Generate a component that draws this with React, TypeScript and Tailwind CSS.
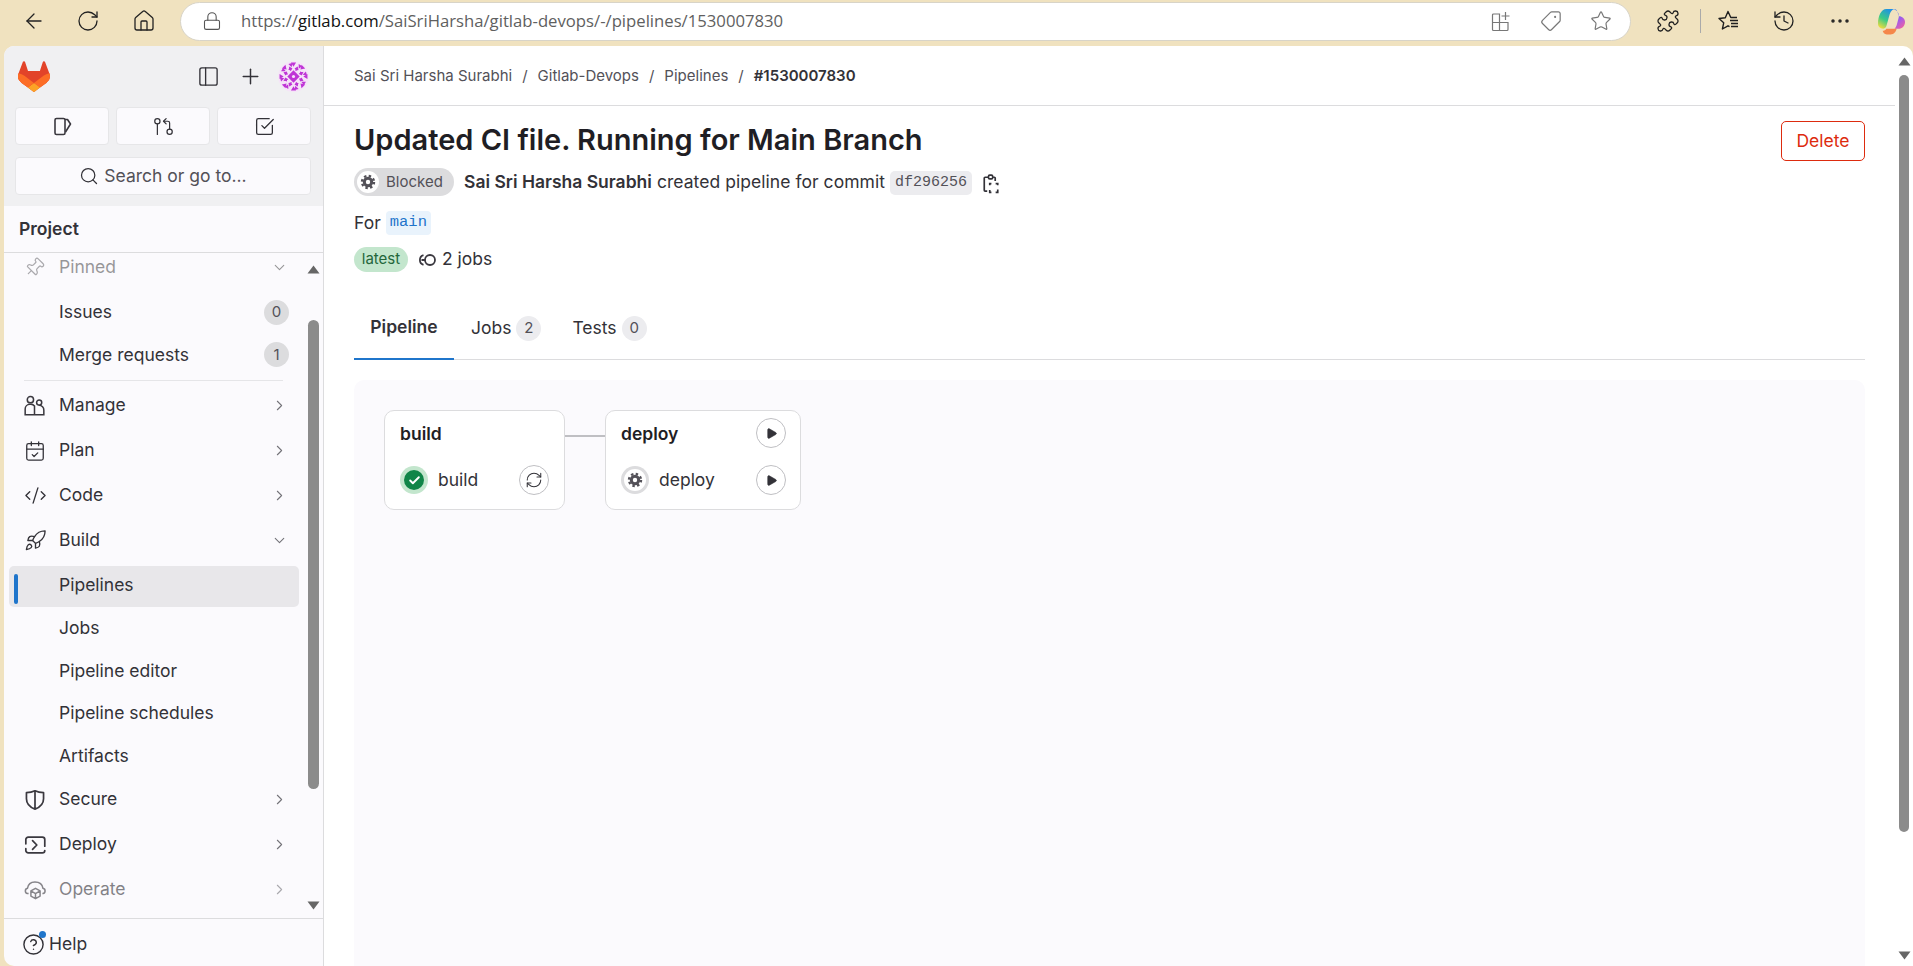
import {
  ArrowLeft,
  RotateCw,
  House,
  Lock,
  Tag,
  Star,
  Puzzle,
  History,
  Ellipsis,
  PanelLeft,
  Plus,
  Search,
  GitPullRequestArrow,
  SquareCheckBig,
  Pin,
  ChevronRight,
  ChevronDown,
  CalendarCheck,
  CodeXml,
  Rocket,
  CircleHelp,
  RefreshCw,
  Play,
  Check,
} from 'lucide-react';

function GitlabLogo() {
  return (
    <svg width="32" height="31" viewBox="0 0 25 24">
      <path fill="#E24329" d="m24.507 9.5-.034-.09L21.082.562a.896.896 0 0 0-1.694.091l-2.29 7.01H7.825L5.535.653a.898.898 0 0 0-1.694-.09L.451 9.411.416 9.5a6.297 6.297 0 0 0 2.09 7.278l.012.01.03.022 5.16 3.867 2.56 1.935 1.554 1.176a1.051 1.051 0 0 0 1.268 0l1.555-1.176 2.56-1.935 5.197-3.89.014-.01A6.297 6.297 0 0 0 24.507 9.5Z" />
      <path fill="#FC6D26" d="m24.507 9.5-.034-.09a11.44 11.44 0 0 0-4.56 2.051l-7.447 5.632 4.742 3.584 5.197-3.89.014-.01A6.297 6.297 0 0 0 24.507 9.5Z" />
      <path fill="#FCA326" d="m7.707 20.677 2.56 1.935 1.555 1.176a1.051 1.051 0 0 0 1.268 0l1.555-1.176 2.56-1.935-4.743-3.584-4.755 3.584Z" />
      <path fill="#FC6D26" d="M5.01 11.461a11.43 11.43 0 0 0-4.56-2.05L.416 9.5a6.297 6.297 0 0 0 2.09 7.278l.012.01.03.022 5.16 3.867 4.745-3.584-7.444-5.632Z" />
    </svg>
  );
}

function Avatar() {
  const spokes = [0, 45, 90, 135, 180, 225, 270, 315];
  return (
    <svg width="31" height="31" viewBox="0 0 30 30">
      <circle cx="15" cy="15" r="15" fill="#f5e4f8" />
      <path d="M15 9l6 6-6 6-6-6z" fill="#bf35d6" />
      <circle cx="15" cy="15" r="1.500" fill="#f5e4f8" />
      {spokes.map((a) => (
        <g key={a} transform={`rotate(${a} 15 15)`} fill="#bf35d6">
          <path d="M12.500 1.500h5l-2.500 4zM10.500 5.500l3.500 1.500-2 3zM16 7l3.500-1.500-1.500 4z" />
          <path d="M20 3l3.500 2-3.500 2.500z" />
        </g>
      ))}
    </svg>
  );
}

function Copilot() {
  return (
    <svg width="27" height="27" viewBox="0 0 26 26">
      <defs>
        <linearGradient id="cpa" x1="0.7" y1="0" x2="0.2" y2="1">
          <stop offset="0" stopColor="#1f8fe8" />
          <stop offset="0.55" stopColor="#3ccb85" />
          <stop offset="1" stopColor="#f6dc3a" />
        </linearGradient>
        <linearGradient id="cpb" x1="0.3" y1="0" x2="0.8" y2="1">
          <stop offset="0" stopColor="#2f6ff0" />
          <stop offset="0.55" stopColor="#a85be6" />
          <stop offset="1" stopColor="#f0629e" />
        </linearGradient>
      </defs>
      <path fill="url(#cpa)" d="M8 1h8c-3 .5-4 3-5 6l-2.500 9c-.5 2.500-1.500 4-3.500 4-3 0-5-2-5-5C0 8 3 1 8 1z" />
      <path fill="url(#cpb)" d="M15 1c2 0 3.500 1 4 3.500l1 3.500c3.500 0 6 2.500 6 5.500 0 4-3 6.500-6 6.500h-4c1-1 1.800-2.500 2.300-4.500L20 9c.5-3.500-1-6.500-5-8z" />
      <path fill="#f5874a" d="M8 20h10c-1 3-2.500 5.500-6 5.500H8.500C6 25.500 5 23.500 4.500 22c1.500 0 2.800-.5 3.500-2z" />
    </svg>
  );
}

function AppsPlus() {
  return (
    <svg width="20" height="21" viewBox="0 0 20 21" fill="none" stroke="#777" strokeWidth="1.2">
      <path d="M8.500 3H2.500a1 1 0 0 0-1 1v14.500a1 1 0 0 0 1 1H16a1 1 0 0 0 1-1V11.500H8.500zM8.500 11.500v8M1.500 11.500h7M14.500 1v8M10.500 5h8" />
    </svg>
  );
}

function FavList() {
  return (
    <svg width="24" height="24" viewBox="0 0 24 24" fill="none" stroke="#1f1f1f" strokeWidth="1.400" strokeLinejoin="round">
      <path d="M20 8.500h-6.200L11 2.500 8.300 8.700 2 9.500l4.700 4.300L5.400 20l5.600-3.200 1.500.9" />
      <path d="M13 11.500h8M14 14.500h7M14 17.500h7" />
    </svg>
  );
}

function IssueIcon() {
  return (
    <svg width="19" height="19" viewBox="0 0 19 19" fill="none" stroke="#3a383f" strokeWidth="1.600" strokeLinejoin="round">
      <path d="M3.500 1.500h7a1.500 1.500 0 0 1 1.500 1.500v13a1.500 1.500 0 0 1-1.500 1.500h-7A1.500 1.500 0 0 1 2 16V3a1.500 1.500 0 0 1 1.500-1.500z" />
      <path d="M12 2.500h2.500l3 4.500-5 8" />
    </svg>
  );
}

function UsersIcon() {
  return (
    <svg width="21" height="21" viewBox="0 0 18 18" fill="none" stroke="#3a383f" strokeWidth="1.300">
      <circle cx="5.500" cy="4" r="2.700" />
      <circle cx="13" cy="6.500" r="2.200" />
      <path d="M1 17v-5a4 4 0 0 1 4-4h1a4 4 0 0 1 3 1.500V17zM9 17h8v-4a4 4 0 0 0-4-4.200" />
    </svg>
  );
}

function ShieldIcon() {
  return (
    <svg width="22" height="22" viewBox="0 0 18 18" fill="none" stroke="#3a383f" strokeWidth="1.400" strokeLinejoin="round">
      <path d="M9 1.500c2 1 4.500 1.500 7 1.500v5c0 4-3 7-7 8.500C5 15 2 12 2 8V3c2.500 0 5-.5 7-1.500zM9 2v14.500" />
    </svg>
  );
}

function DeployIcon() {
  return (
    <svg width="22" height="22" viewBox="0 0 18 18" fill="none" stroke="#3a383f" strokeWidth="1.400" strokeLinecap="round" strokeLinejoin="round">
      <path d="M1.500 8V4.500a2 2 0 0 1 2-2H15a2 2 0 0 1 2 2V10M17 13.500a2 2 0 0 1-2 2H3.500a2 2 0 0 1-2-2V12" />
      <path d="M7 5.500l3.500 3.500L7 12.500" />
    </svg>
  );
}

function OperateIcon() {
  return (
    <svg width="23" height="21" viewBox="0 0 20 18" fill="none" stroke="#3a383f" strokeWidth="1.300" strokeLinejoin="round">
      <path d="M4 12.500H3a2.300 2.300 0 0 1 0-4.500c.5-3 2.500-5.500 6.500-5.500s6.500 2 7 5.500a2.300 2.300 0 0 1 0 4.500H16" />
      <path d="M10 8l4 2.200v4.500L10 17l-4-2.300v-4.500zM6 10.200l4 2.300 4-2.300M10 12.500V17" />
    </svg>
  );
}

function JobsIcon() {
  return (
    <svg width="20" height="14" viewBox="0 0 20 14" fill="none" stroke="#3a383f" strokeWidth="1.800">
      <circle cx="13" cy="7" r="5" />
      <path d="M6.500 2.200a5 5 0 0 0 0 9.600M4.500 7h3.500" />
    </svg>
  );
}

function Gear({ size }: { size: number }) {
  return (
    <svg width={size} height={size} viewBox="0 0 16 16" className="text-[#535158]">
      <circle cx="8" cy="8" r="5.200" fill="currentColor" />
      <circle cx="8" cy="8" r="6" fill="none" stroke="currentColor" strokeWidth="2.400" strokeDasharray="2.400 2.310" />
      <circle cx="8" cy="8" r="2.200" fill="white" />
    </svg>
  );
}

function ClipboardDashed() {
  return (
    <svg width="16" height="20" viewBox="0 0 19 23" fill="none" stroke="#333238" strokeWidth="2">
      <path d="M6.500 3.500H2.500a1 1 0 0 0-1 1V19a1 1 0 0 0 1 1H5M12 3.500h1.500a1 1 0 0 1 1 1V8" />
      <rect x="6.500" y="1" width="5" height="4.500" rx="1.500" />
      <path d="M8 13v-2h2M15 11h2.500v2M17.500 18v3.500H15M10 21.500H8v-3" />
    </svg>
  );
}

function ArrowUp() {
  return (
    <svg width="13" height="9" viewBox="0 0 13 9" className="block shrink-0">
      <path d="M6.500 0.500L12.500 8.500H0.500z" fill="#666" />
    </svg>
  );
}

function ArrowDown() {
  return (
    <svg width="13" height="9" viewBox="0 0 13 9" className="block shrink-0">
      <path d="M6.500 8.500L12.500 0.500H0.500z" fill="#666" />
    </svg>
  );
}

function NavRow({ label, icon, chevron, faded }: { label: string; icon: React.ReactNode; chevron: 'right' | 'down'; faded?: boolean }) {
  return (
    <div className={`flex h-[45px] items-center pl-[20px] pr-[35px] ${faded ? 'opacity-60' : ''}`}>
      <div className="flex w-[35px] items-center">{icon}</div>
      <span className="flex-1 text-[#333238]">{label}</span>
      {chevron === 'right' ? (
        <ChevronRight size={17} strokeWidth={1.5} className="text-[#737278]" />
      ) : (
        <ChevronDown size={17} strokeWidth={1.5} className="text-[#737278]" />
      )}
    </div>
  );
}

function SubRow({ label, count, active }: { label: string; count?: number; active?: boolean }) {
  if (active) {
    return (
      <div className="mx-[5px] mt-[3px] flex h-[41px] w-[290px] items-center rounded-[5px] bg-[#e8e7ea] pb-[2px] pl-[50px]">
        <span className="text-[#333238]">{label}</span>
      </div>
    );
  }
  return (
    <div className="flex h-[42.500px] items-center pl-[55px] pr-[34px]">
      <span className="flex-1 text-[#333238]">{label}</span>
      {count !== undefined && (
        <span className="flex h-[25px] w-[25px] items-center justify-center rounded-full bg-[#dcdcde] text-[15px] text-[#535158]">{count}</span>
      )}
    </div>
  );
}

function Sidebar() {
  return (
    <aside className="relative flex w-[320px] shrink-0 flex-col overflow-hidden rounded-tl-[10px] rounded-bl-[10px] border-r border-[#dcdcde] bg-[#fbfafd] text-[17.500px]">
      <div className="h-[160px] bg-[#f0f0f2] px-[11px] pt-[15px]">
        <div className="flex h-[31px] items-center pl-[3px] pr-[3px]">
          <GitlabLogo />
          <div className="flex-1" />
          <PanelLeft size={23} strokeWidth={1.4} className="mr-[18px] text-[#333238]" />
          <Plus size={25} strokeWidth={1.4} className="mr-[15px] text-[#333238]" />
          <Avatar />
        </div>
        <div className="mt-[15px] flex gap-[7px]">
          <div className="flex h-[38px] w-[94px] items-center justify-center rounded-[4px] border border-[#e6e6e8] bg-[#fbfafd]">
            <IssueIcon />
          </div>
          <div className="flex h-[38px] w-[94px] items-center justify-center rounded-[4px] border border-[#e6e6e8] bg-[#fbfafd]">
            <GitPullRequestArrow size={21} strokeWidth={1.4} className="text-[#333238]" />
          </div>
          <div className="flex h-[38px] w-[94px] items-center justify-center rounded-[4px] border border-[#e6e6e8] bg-[#fbfafd]">
            <SquareCheckBig size={21} strokeWidth={1.5} className="text-[#333238]" />
          </div>
        </div>
        <div className="mt-[12px] flex h-[38px] w-[296px] items-center justify-center gap-[5px] rounded-[4px] border border-[#e6e6e8] bg-[#fbfafd] text-[#535158]">
          <Search size={20} strokeWidth={1.500} className="text-[#333238]" />
          Search or go to...
        </div>
      </div>
      <div className="flex h-[47px] items-center border-b border-[#dcdcde] pl-[15px] font-semibold text-[#333238]">Project</div>
      <div className="h-[665px] overflow-hidden">
        <div className="flex h-[28px] items-center pl-[20px] pr-[35px] opacity-40">
          <div className="flex w-[35px]">
            <Pin size={21} strokeWidth={1.4} className="rotate-45 text-[#333238]" />
          </div>
          <span className="flex-1">Pinned</span>
          <ChevronDown size={17} strokeWidth={1.5} />
        </div>
        <div className="h-[10px]" />
        <SubRow label="Issues" count={0} />
        <SubRow label="Merge requests" count={1} />
        <div className="mx-[20px] mt-[4px] mb-[2px] h-px w-[259px] bg-[#e5e5e8]" />
        <NavRow label="Manage" icon={<UsersIcon />} chevron="right" />
        <NavRow label="Plan" icon={<CalendarCheck size={22} strokeWidth={1.4} className="text-[#333238]" />} chevron="right" />
        <NavRow label="Code" icon={<CodeXml size={23} strokeWidth={1.4} className="text-[#333238]" />} chevron="right" />
        <NavRow label="Build" icon={<Rocket size={23} strokeWidth={1.4} className="text-[#333238]" />} chevron="down" />
        <div className="relative">
          <SubRow label="Pipelines" active />
          <div className="absolute top-[8px] left-[10px] h-[30px] w-[4px] rounded-full bg-[#1f75cb]" />
        </div>
        <SubRow label="Jobs" />
        <SubRow label="Pipeline editor" />
        <SubRow label="Pipeline schedules" />
        <SubRow label="Artifacts" />
        <NavRow label="Secure" icon={<ShieldIcon />} chevron="right" />
        <NavRow label="Deploy" icon={<DeployIcon />} chevron="right" />
        <NavRow label="Operate" icon={<OperateIcon />} chevron="right" faded />
      </div>
      <div className="relative flex flex-1 items-center gap-[4px] border-t border-[#dcdcde] pt-[4px] pl-[18px]">
        <div className="relative">
          <CircleHelp size={23} strokeWidth={1.5} className="text-[#333238]" />
          <span className="absolute -top-[2px] left-[17px] h-[7px] w-[7px] rounded-full bg-[#1f75cb]" />
        </div>
        <span className="text-[#333238]">Help</span>
      </div>
      {/* sidebar scrollbar */}
      <div className="absolute top-[219px] right-[3px]"><ArrowUp /></div>
      <div className="absolute top-[274px] right-[4px] h-[469px] w-[11px] rounded-full bg-[#8b8b8b]" />
      <div className="absolute top-[855px] right-[3px]"><ArrowDown /></div>
    </aside>
  );
}

function JobButton({ kind }: { kind: 'retry' | 'play' }) {
  return (
    <div className="flex h-[30px] w-[30px] items-center justify-center rounded-full border border-[#bfbfc3] bg-white text-[#333238]">
      {kind === 'retry' ? <RefreshCw size={18} strokeWidth={1.4} /> : <Play size={13} fill="currentColor" strokeWidth={1} />}
    </div>
  );
}

function Tabs() {
  return (
    <div className="mt-[23px] flex h-[65px] shrink-0 border-b border-[#dcdcde] text-[17.500px]">
      <div className="flex h-[65px] w-[100px] items-center justify-center border-b-2 border-[#1f75cb] pt-[2px] font-semibold text-[#333238]">Pipeline</div>
      <div className="flex items-center gap-[5px] pt-[2px] pl-[17px] text-[#333238]">
        Jobs
        <span className="flex h-[25px] min-w-[25px] items-center justify-center rounded-full bg-[#ececef] text-[15px] text-[#535158]">2</span>
      </div>
      <div className="flex items-center gap-[5px] pt-[2px] pl-[31px] text-[#333238]">
        Tests
        <span className="flex h-[25px] min-w-[25px] items-center justify-center rounded-full bg-[#ececef] text-[15px] text-[#535158]">0</span>
      </div>
    </div>
  );
}

function Graph() {
  return (
    <div className="mt-[20px] flex-1 rounded-t-[10px] bg-[#fbfafd] pt-[30px] pl-[30px]">
      <div className="flex items-start">
        <div className="h-[100px] w-[181px] rounded-[10px] border border-[#dcdcde] bg-white px-[15px] pt-[7px]">
          <div className="flex h-[30px] items-center pt-[2px] font-semibold text-[#1f1e24]">build</div>
          <div className="mt-[17px] flex items-center">
            <span className="flex h-[28px] w-[28px] items-center justify-center rounded-full bg-[#c3e6cd]">
              <span className="flex h-[20px] w-[20px] items-center justify-center rounded-full bg-[#108548] text-white">
                <Check size={13} strokeWidth={3.5} />
              </span>
            </span>
            <span className="ml-[10px] flex-1 text-[#333238]">build</span>
            <JobButton kind="retry" />
          </div>
        </div>
        <div className="mt-[25px] h-[2px] w-[40px] bg-[#bfbfc3]" />
        <div className="h-[100px] w-[196px] rounded-[10px] border border-[#dcdcde] bg-white pr-[14px] pl-[15px] pt-[7px]">
          <div className="flex h-[30px] items-center justify-between font-semibold text-[#1f1e24]">
            <span className="mt-[2px]">deploy</span>
            <JobButton kind="play" />
          </div>
          <div className="mt-[17px] flex items-center">
            <span className="flex h-[28px] w-[28px] items-center justify-center rounded-full bg-[#dcdcde]">
              <span className="flex h-[22px] w-[22px] items-center justify-center rounded-full bg-white">
                <Gear size={16} />
              </span>
            </span>
            <span className="ml-[10px] flex-1 text-[#333238]">deploy</span>
            <JobButton kind="play" />
          </div>
        </div>
      </div>
    </div>
  );
}

export default function App() {
  return (
    <div className="flex h-[966px] w-[1913px] flex-col overflow-hidden bg-[#f0e2bf] font-['Inter',sans-serif]">
      {/* browser chrome */}
      <div className="flex h-[46px] shrink-0 items-center pb-[4px]">
        <ArrowLeft size={24} strokeWidth={1.300} className="ml-[22px] text-[#222]" />
        <RotateCw size={24} strokeWidth={1.300} className="ml-[30px] text-[#222]" />
        <House size={24} strokeWidth={1.300} className="ml-[32px] text-[#222]" />
        <div className="ml-[24px] flex h-[39px] w-[1451px] items-center rounded-full border border-[#d8d4c8] bg-white pr-[18px] pl-[21px] font-['Open_Sans',sans-serif] text-[16.700px] text-[#5f5f5f]">
          <Lock size={20} strokeWidth={1.300} className="text-[#555]" />
          <span className="ml-[19px] flex-1">
            https://<span className="text-[#111]">gitlab.com</span>/SaiSriHarsha/gitlab-devops/-/pipelines/1530007830
          </span>
          <AppsPlus />
          <Tag size={22} strokeWidth={1.300} className="ml-[29px] scale-x-[-1] text-[#777]" />
          <Star size={22} strokeWidth={1.300} className="ml-[28px] text-[#777]" />
        </div>
        <Puzzle size={24} strokeWidth={1.300} className="ml-[25px] text-[#222]" />
        <div className="ml-[20px] h-[24px] w-px bg-[#aaa]" />
        <div className="ml-[16px]"><FavList /></div>
        <History size={24} strokeWidth={1.300} className="ml-[31px] text-[#222]" />
        <Ellipsis size={24} strokeWidth={1.500} className="ml-[32px] text-[#222]" />
        <div className="ml-[26px]"><Copilot /></div>
      </div>
      <div className="ml-[4px] flex min-h-0 flex-1">
        <Sidebar />
        <main className="flex min-w-0 flex-1 flex-col bg-white text-[17.500px] text-[#333238]">
          <div className="flex h-[60px] shrink-0 items-center gap-[7px] border-b border-[#dcdcde] pt-[2px] pl-[30px] text-[15px] text-[#535158]">
            <span>Sai Sri Harsha Surabhi</span>
            <span className="px-[3px]">/</span>
            <span>Gitlab-Devops</span>
            <span className="px-[3px]">/</span>
            <span>Pipelines</span>
            <span className="px-[3px]">/</span>
            <span className="font-semibold text-[#333238]">#1530007830</span>
          </div>
          <div className="flex min-h-0 flex-1 flex-col pr-[30px] pl-[30px]">
            <div className="flex h-[59px] shrink-0 items-center justify-between pt-[9px]">
              <h1 className="text-[29px] font-semibold text-[#1f1e24]">Updated CI file. Running for Main Branch</h1>
              <div className="mt-[2px] flex h-[40px] w-[84px] items-center justify-center rounded-[5px] border border-[#dd2b0e] text-[#dd2b0e]">Delete</div>
            </div>
            <div className="mt-[3px] flex h-[28px] shrink-0 items-center">
              <div className="flex h-[28px] w-[100px] items-center rounded-full bg-[#dcdcde] pl-[3px] text-[15px] text-[#535158]">
                <span className="flex h-[22px] w-[22px] items-center justify-center rounded-full bg-white">
                  <Gear size={16} />
                </span>
                <span className="ml-[7px]">Blocked</span>
              </div>
              <span className="ml-[10px] font-semibold text-[#333238]">Sai Sri Harsha Surabhi</span>
              <span className="ml-[5px] tracking-[0.05px]">created pipeline for commit</span>
              <span className="mt-[2px] ml-[5px] rounded-[5px] bg-[#ececef] px-[5px] py-px font-['Liberation_Mono',monospace] text-[15px] text-[#535158]">df296256</span>
              <span className="mt-[3px] ml-[11px]"><ClipboardDashed /></span>
            </div>
            <div className="mt-[13px] flex h-[28px] shrink-0 items-center">
              For
              <span className="ml-[5px] rounded-[4px] bg-[#e9f3fc] px-[4px] font-['Liberation_Mono',monospace] text-[15.500px] text-[#1f75cb]">main</span>
            </div>
            <div className="mt-[10px] flex h-[25px] shrink-0 items-center">
              <span className="flex h-[25px] w-[54px] items-center justify-center rounded-full bg-[#c3e6cd] text-[15px] text-[#24663b]">latest</span>
              <span className="ml-[9px]"><JobsIcon /></span>
              <span className="ml-[5px]">2 jobs</span>
            </div>
            <Tabs />
            <Graph />
          </div>
        </main>
        {/* page scrollbar */}
        <div className="flex w-[18px] shrink-0 flex-col items-center rounded-tr-[10px] bg-white pt-[11px]">
          <ArrowUp />
          <div className="mt-[9px] h-[757px] w-[10px] shrink-0 rounded-full bg-[#8b8b8b]" />
          <div className="flex-1" />
          <div className="pb-[6px]"><ArrowDown /></div>
        </div>
      </div>
    </div>
  );
}
